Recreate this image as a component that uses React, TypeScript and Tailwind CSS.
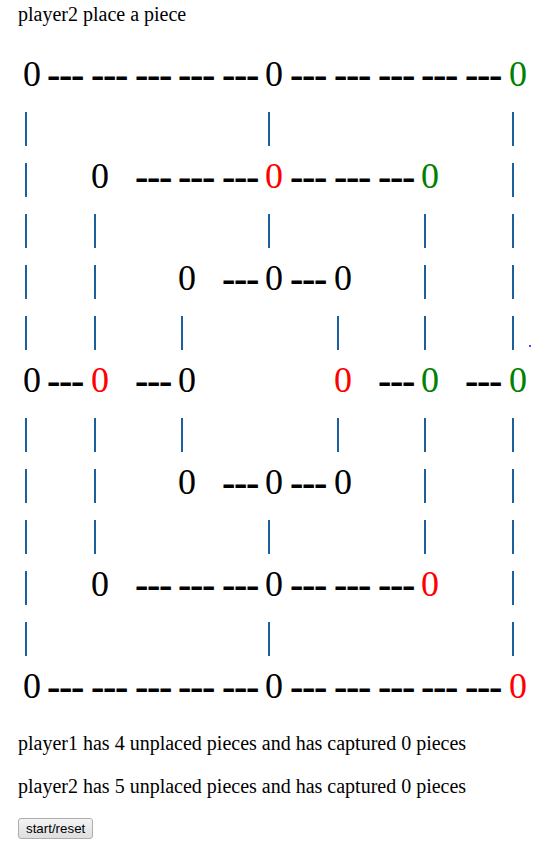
import React from 'react'

// board drawn as a 13x13 grid: o/r/g = piece (black/red/green), - = link, | = bar, . = empty
const board = [
  'o-----o-----g',
  '|.....|.....|',
  '|.o---r---g.|',
  '|.|...|...|.|',
  '|.|.o-o-o.|.|',
  '|.|.|...|.|.|',
  'o-r-o...r-g-g',
  '|.|.|...|.|.|',
  '|.|.o-o-o.|.|',
  '|.|...|...|.|',
  '|.o---o---r.|',
  '|.....|.....|',
  'o-----o-----r',
]

function Cell({ ch, col, dot }: { ch: string; col: number; dot?: boolean }) {
  if (ch === 'o' || ch === 'r' || ch === 'g') {
    const color = ch === 'r' ? 'text-[#ff0000]' : ch === 'g' ? 'text-[#008000]' : 'text-black'
    return <div className={`h-[51px] text-[36px] leading-[51px] ${color}`}>0</div>
  }
  if (ch === '-') {
    return <div className="h-[51px] text-[40px] leading-[51px] tracking-[-1.3px] font-bold whitespace-nowrap">---</div>
  }
  if (ch === '|') {
    return (
      <div className="relative h-[51px]">
        <div className={`mt-[12px] h-[34px] w-[2px] bg-[#1d5f9c] ${col === 0 ? 'ml-[2px]' : 'ml-[3px]'}`} />
        {dot && <div className="absolute left-[20px] top-[41px] w-[2px] h-[2px] bg-[#4a4aff]" />}
      </div>
    )
  }
  return <div className="h-[51px]" />
}

export default function App() {
  return (
    <div className="min-h-[854px] bg-white text-black px-[18px] font-['Liberation_Serif',_'Times_New_Roman',_serif]">
      <div className="h-[49px] pt-[3px] text-[20px] leading-[23px]">player2 place a piece</div>

      <div className="ml-[5px] grid grid-cols-[24px_44px_44px_43px_44px_43px_25px_44px_44px_43px_44px_44px_25px]">
        {board.map((row, r) =>
          row.split('').map((ch, c) => (
            <Cell key={`${r}-${c}`} ch={ch} col={c} dot={r === 5 && c === 12} />
          ))
        )}
      </div>

      <p className="mt-[20px] text-[20px] leading-[23px]">player1 has 4 unplaced pieces and has captured 0 pieces</p>
      <p className="mt-[20px] text-[20px] leading-[23px]">player2 has 5 unplaced pieces and has captured 0 pieces</p>

      <button className="mt-[20px] h-[21px] px-[7px] rounded-[3px] border border-[#adadad] bg-gradient-to-b from-[#f4f4f4] to-[#dedede] text-[13.33px] leading-none text-black font-['Liberation_Sans',_Arial,_sans-serif]">
        start/reset
      </button>
    </div>
  )
}
